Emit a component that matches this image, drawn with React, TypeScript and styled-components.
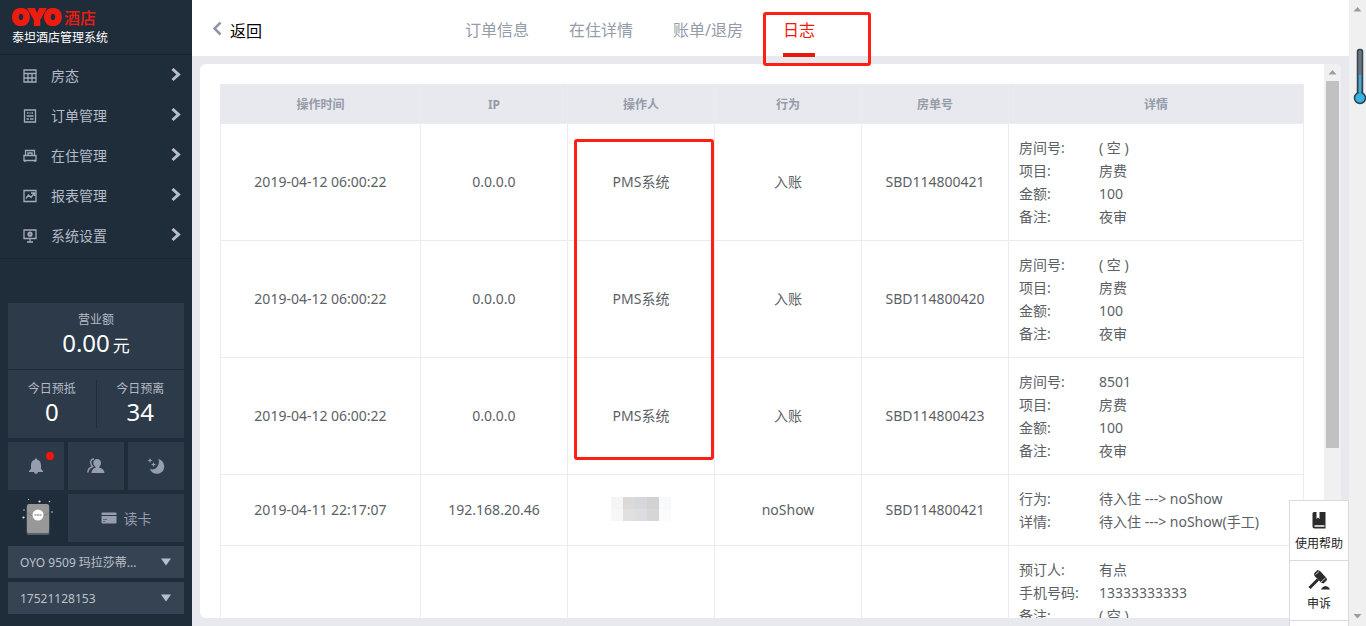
import React from "react";
import styled, { createGlobalStyle } from "styled-components";

const GlobalStyle = createGlobalStyle`
  *, *::before, *::after { box-sizing: border-box; }
  html, body { margin: 0; height: 100%; overflow: hidden; }
  body, button, select {
    font-family: "Noto Sans", "Noto Sans CJK SC", sans-serif;
    font-size: 14px;
  }
  button { border: 0; padding: 0; background: none; cursor: pointer; }
  a { color: inherit; text-decoration: none; }
`;

const Page = styled.div`
  display: flex;
  height: 100vh;
  background: #e8e9ee;
`;

/* ---------- sidebar ---------- */

const Sidebar = styled.aside`
  display: flex;
  flex: 0 0 192px;
  flex-direction: column;
  padding-bottom: 12px;
  background: #1f2d3a;
  color: #b4bac6;
`;

const Brand = styled.header`
  height: 55px;
  padding: 6px 12px 0;
  border-bottom: 1px solid #182430;
`;

const Logo = styled.div`
  display: flex;
  align-items: center;
  gap: 3px;
  height: 22px;
  color: #ee1c0f;
`;

const LogoMark = styled.span`
  font: 900 22px/22px Inter, sans-serif;
  -webkit-text-stroke: 2px #ee1c0f;
`;

const LogoName = styled.span`
  font: 500 16px/22px "Noto Sans CJK SC", sans-serif;
`;

const BrandTitle = styled.div`
  color: #fff;
  font-size: 12px;
  line-height: 20px;
`;

const Menu = styled.nav`
  display: flex;
  flex-direction: column;
  padding-bottom: 3px;
  border-bottom: 1px solid #1a2733;
`;

const MenuLink = styled.a`
  display: flex;
  align-items: center;
  height: 40px;
  padding: 2px 11px 0 23px;
  line-height: 20px;

  span { flex: 1; margin-left: 14px; }
`;

const Dashboard = styled.div`
  display: flex;
  flex-direction: column;
  gap: 4px;
  margin: auto 8px 0;
`;

const Stats = styled.section`
  display: flex;
  flex-direction: column;
  gap: 1px;
`;

const StatRow = styled.div<{ $height: number }>`
  display: flex;
  align-items: center;
  height: ${(p) => p.$height}px;
  background: #2c3a49;
`;

const Stat = styled.div`
  flex: 1;
  text-align: center;
  font-size: 12px;
  line-height: 18px;

  & + & { border-left: 1px solid #1f2d3a; }
`;

const StatValue = styled.div`
  padding-bottom: 2px;
  color: #fff;
  font-size: 24px;
  line-height: 28px;

  small { margin-left: 3px; font-size: 17px; }
`;

const Tools = styled.div`
  display: grid;
  grid-template-columns: repeat(3, 1fr);
  gap: 4px;
`;

const Tool = styled.button<{ $wide?: boolean; $bare?: boolean }>`
  position: relative;
  display: flex;
  align-items: center;
  justify-content: center;
  gap: 7px;
  grid-column: span ${(p) => (p.$wide ? 2 : 1)};
  height: 48px;
  background: ${(p) => (p.$bare ? "transparent" : "#2c3a49")};
  color: #969eae;
`;

const Dot = styled.i`
  position: absolute;
  top: 10px;
  right: 10px;
  width: 8px;
  height: 8px;
  border-radius: 50%;
  background: #f5150a;
`;

const SelectBox = styled.label`
  display: grid;
  align-items: center;
  height: 32px;
  background: #364352;

  select, svg { grid-area: 1 / 1; }
  svg { justify-self: end; margin-right: 13px; pointer-events: none; }
`;

const Select = styled.select`
  width: 100%;
  height: 32px;
  padding: 0 32px 0 12px;
  border: 0;
  appearance: none;
  background: transparent;
  color: #bcc1cc;
  font-size: 12px;
`;

/* ---------- main area ---------- */

const Main = styled.main`
  display: flex;
  flex: 1;
  flex-direction: column;
  min-width: 0;
`;

const TopBar = styled.header`
  display: flex;
  flex: 0 0 56px;
  align-items: stretch;
  padding-left: 20px;
  background: #fff;
`;

const BackButton = styled.button`
  display: flex;
  align-items: center;
  gap: 8px;
  width: 253px;
  padding-top: 3px;
  color: #000;
  font-size: 16px;
`;

const Tabs = styled.nav`
  display: flex;
  gap: 40px;
`;

const Tab = styled.a<{ $active?: boolean }>`
  position: relative;
  padding-top: 18px;
  color: ${(p) => (p.$active ? "#f21a0c" : "#959ba8")};
  font-size: 16px;
  line-height: 24px;

  &::after {
    content: "";
    display: ${(p) => (p.$active ? "block" : "none")};
    height: 4px;
    margin: 11px 0 -1px;
    background: #e9170c;
  }
`;

const TabMark = styled.span`
  position: absolute;
  top: 12px;
  left: -20px;
  z-index: 1;
  width: 108px;
  height: 54px;
  border: 3px solid #ff2013;
  border-radius: 3px;
`;

const Panel = styled.section`
  display: flex;
  flex: 1;
  min-height: 0;
  margin: 8px;
  overflow: hidden;
  border-radius: 6px;
  background: #fff;
`;

const PanelBody = styled.div`
  flex: 1;
  min-width: 0;
  padding: 20px 20px 0;
`;

const Table = styled.table`
  width: 100%;
  table-layout: fixed;
  border-collapse: collapse;
  color: #5c5f66;
`;

const Head = styled.th<{ $width?: number }>`
  width: ${(p) => (p.$width ? `${p.$width}px` : "auto")};
  height: 39px;
  padding: 0;
  border: 1px solid #ebebf2;
  background: #e8e9ee;
  color: #959ba8;
  font-size: 12px;
  font-weight: 700;
`;

const Cell = styled.td<{ $detail?: boolean }>`
  position: relative;
  padding: ${(p) => (p.$detail ? "12px 10px" : "0 0 2px")};
  border: 1px solid #ebebf2;
  text-align: ${(p) => (p.$detail ? "left" : "center")};
  line-height: 23px;
`;

const OperatorMark = styled.span`
  position: absolute;
  top: 15px;
  right: 0;
  left: 6px;
  z-index: 1;
  height: 321px;
  border: 3px solid #ff2013;
  border-radius: 3px;
`;

const Details = styled.dl`
  display: grid;
  grid-template-columns: 80px 1fr;
  margin: 0;
  white-space: nowrap;

  dd { margin: 0; }
`;

const Mosaic = styled.svg`
  display: block;
  margin: auto;
`;

/* ---------- scroll bars and floating parts ---------- */

const ScrollTrack = styled.div`
  display: flex;
  flex: 0 0 17px;
  flex-direction: column;
  align-items: center;
  background: #f0f0f0;
`;

const PageTrack = styled(ScrollTrack)`
  position: relative;
  justify-content: space-between;
  padding: 7px 0 7px;
`;

const PanelTrack = styled(ScrollTrack)`
  padding-top: 6px;
`;

const Thumb = styled.div`
  width: 13px;
  height: 67%;
  margin-top: 6px;
  background: #c1c1c1;
`;

const Thermometer = styled.svg`
  position: absolute;
  top: 48px;
  right: -1px;
`;

const HelpDock = styled.div`
  position: fixed;
  right: 17px;
  bottom: 0;
  z-index: 2;
  width: 60px;
  height: 126px;
  border: 1px solid #d8d9e2;
  border-bottom: 0;
  background: #fff;
`;

const HelpButton = styled.button`
  display: flex;
  flex-direction: column;
  align-items: center;
  gap: 4px;
  width: 100%;
  height: 60px;
  padding-top: 9px;
  border-bottom: 1px solid #d8d9e2;
  color: #222;
  font-size: 12px;
  line-height: 20px;
`;

const Arrow = ({ down }: { down?: boolean }) => (
  <svg width="9" height="5" viewBox="0 0 9 5" fill="#9d9d9d" aria-hidden>
    <path d={down ? "M0.500 0H8.500L4.500 4.500Z" : "M0.500 4.500H8.500L4.500 0Z"} />
  </svg>
);

const Chevron = () => (
  <svg width="10" height="16" viewBox="0 0 10 16" fill="none" stroke="#b9bfca" strokeWidth="3" aria-hidden>
    <path d="M1.500 1L7.500 6.500L1.500 12" />
  </svg>
);

const menu: { name: string; icon: React.ReactNode }[] = [
  { name: "房态", icon: <path d="M1 1H13V13H1ZM1 4.500H13M1 9H13M5 4.500V13M9 4.500V13" /> },
  { name: "订单管理", icon: <path d="M1.500 1H12.500V13H1.500ZM4 4H5.500M6.500 4H7.500M8.500 4H10M3.500 7H10.500M3.500 10H6M7 10H10.500" /> },
  { name: "在住管理", icon: <path d="M2.500 6.500V1.500H11.500V6.500M5 6V4H9V6M1 6.500H13V11.500H1ZM2 11.500V13M12 11.500V13" /> },
  { name: "报表管理", icon: <path d="M1 1.500H13V12.500H1ZM3 9.500L5.500 6L8 8.500L11 4.500M8 4H11.500V7" /> },
  {
    name: "系统设置",
    icon: (
      <>
        <path d="M1 1H13V9.500H1ZM7 9.500V13M4 13H10" />
        <circle cx="7" cy="5.200" r="1.600" strokeWidth="2" />
      </>
    ),
  },
];

type Row = { time?: string; ip?: string; user?: string; masked?: boolean; act?: string; order?: string; detail: [string, string][] };

const nightAudit = (order: string, room: string): Row => ({
  time: "2019-04-12 06:00:22",
  ip: "0.0.0.0",
  user: "PMS系统",
  act: "入账",
  order,
  detail: [["房间号:", room], ["项目:", "房费"], ["金额:", "100"], ["备注:", "夜审"]],
});

const rows: Row[] = [
  nightAudit("SBD114800421", "( 空 )"),
  nightAudit("SBD114800420", "( 空 )"),
  nightAudit("SBD114800423", "8501"),
  {
    time: "2019-04-11 22:17:07",
    ip: "192.168.20.46",
    masked: true,
    act: "noShow",
    order: "SBD114800421",
    detail: [["行为:", "待入住 ---> noShow"], ["详情:", "待入住 ---> noShow(手工)"]],
  },
  { detail: [["预订人:", "有点"], ["手机号码:", "13333333333"], ["备注:", "( 空 )"]] },
];

const mosaicColors = [
  ["#f5f5f5", "#dcdad9", "#d5d7dc", "#d2d2d3", "#f8f9fc"],
  ["#f7f7f6", "#e2dfe0", "#dadde1", "#d6d6d7", "#fafbfc"],
];

export default function App() {
  return (
    <Page>
      <GlobalStyle />
      <Sidebar>
        <Brand>
          <Logo>
            <LogoMark>OYO</LogoMark>
            <LogoName>酒店</LogoName>
          </Logo>
          <BrandTitle>泰坦酒店管理系统</BrandTitle>
        </Brand>
        <Menu>
          {menu.map((m) => (
            <MenuLink href="#" key={m.name}>
              <svg width="14" height="14" viewBox="0 0 14 14" fill="none" stroke="#a3aaba" strokeWidth="1.300" aria-hidden>
                {m.icon}
              </svg>
              <span>{m.name}</span>
              <Chevron />
            </MenuLink>
          ))}
        </Menu>
        <Dashboard>
          <Stats>
            <StatRow $height={66}>
              <Stat>
                营业额
                <StatValue>0.00<small>元</small></StatValue>
              </Stat>
            </StatRow>
            <StatRow $height={68}>
              <Stat>
                今日预抵
                <StatValue>0</StatValue>
              </Stat>
              <Stat>
                今日预离
                <StatValue>34</StatValue>
              </Stat>
            </StatRow>
          </Stats>
          <Tools>
            <Tool aria-label="通知">
              <svg width="16" height="16" viewBox="0 0 16 16" fill="currentColor" aria-hidden>
                <path d="M8 0.500C8.800 0.500 9.300 1 9.300 1.800C12 2.500 13 4.700 13 7.500V11L15 13V14H10C9.700 15.300 9 15.800 8 15.800S6.300 15.300 6 14H1V13L3 11V7.500C3 4.700 4 2.500 6.700 1.800C6.700 1 7.200 0.500 8 0.500Z" />
              </svg>
              <Dot />
            </Tool>
            <Tool aria-label="客人">
              <svg width="18" height="16" viewBox="0 0 18 16" fill="currentColor" aria-hidden>
                <path d="M10 1C12.700 1 14 2.800 14 5C14 6.800 13.200 8 12.300 8.800V9.800C15.500 10.300 17.300 12 17.500 15H4.500C4.700 12 6 10.300 8.500 9.800V8.800C7.200 8 6.300 6.800 6.300 5C6.300 2.800 7.600 1 10 1Z" />
                <path d="M7 1C4.600 1 3.500 2.700 3.800 5C4 6.600 4.600 7.700 5.600 8.500C2.500 9.700 1 11.500 0.800 14.500" fill="none" stroke="currentColor" strokeWidth="1.500" />
              </svg>
            </Tool>
            <Tool aria-label="夜审">
              <svg width="18" height="18" viewBox="0 0 18 18" fill="currentColor" aria-hidden>
                <path d="M11.500 2C15 3 17.200 6 17.200 9.500C17.200 13.700 14 16.800 10 16.800C6.500 16.800 4 15 2.800 11.800C5 13 8 12.500 9.800 10.200C11.800 7.800 12.500 5 11.500 2Z" />
                <path d="M3 1L3.700 2.800L5.500 3.500L3.700 4.200L3 6L2.300 4.200L0.500 3.500L2.300 2.800ZM6.500 5L7.200 6.800L9 7.500L7.200 8.200L6.500 10L5.800 8.200L4 7.500L5.800 6.800Z" />
              </svg>
            </Tool>
            <Tool $bare aria-label="OYO 房卡">
              <svg width="36" height="42" viewBox="0 0 36 42" aria-hidden>
                <rect x="8.500" y="8" width="23" height="30" rx="2" fill="#55606b" />
                <rect x="9" y="7" width="22" height="29" rx="2" fill="#989898" />
                <path d="M9 16L20 22L31 16" fill="none" stroke="#858585" />
                <circle cx="20" cy="18" r="5.500" fill="#fff" />
                <path d="M16.500 18H23.500" stroke="#b5b5b5" strokeWidth="2" strokeDasharray="2 0.500" />
                <g fill="#dfe4e8">
                  <circle cx="21.500" cy="4.500" r="1.100" />
                  <circle cx="31.500" cy="4.500" r="0.800" />
                  <circle cx="10.500" cy="2.500" r="0.600" />
                  <circle cx="6" cy="13" r="0.700" />
                  <circle cx="5.500" cy="20.500" r="1.100" />
                  <circle cx="34" cy="15" r="1.100" fill="#7e8791" />
                </g>
              </svg>
            </Tool>
            <Tool $wide>
              <svg width="16" height="12" viewBox="0 0 16 12" fill="currentColor" aria-hidden>
                <path d="M1.500 0.500H14.500Q15.500 0.500 15.500 1.500V3H0.500V1.500Q0.500 0.500 1.500 0.500ZM0.500 4H15.500V10.500Q15.500 11.500 14.500 11.500H1.500Q0.500 11.500 0.500 10.500Z" />
                <path d="M2 9.500H4M2 7.500H6" stroke="#5c6777" />
              </svg>
              读卡
            </Tool>
          </Tools>
          <SelectBox>
            <Select aria-label="酒店">
              <option>OYO 9509 玛拉莎蒂...</option>
            </Select>
            <svg width="10" height="8" viewBox="0 0 10 8" fill="#b9bfca" aria-hidden><path d="M0 0.500H10L5 7.500Z" /></svg>
          </SelectBox>
          <SelectBox>
            <Select aria-label="账号">
              <option>17521128153</option>
            </Select>
            <svg width="10" height="8" viewBox="0 0 10 8" fill="#b9bfca" aria-hidden><path d="M0 0.500H10L5 7.500Z" /></svg>
          </SelectBox>
        </Dashboard>
      </Sidebar>

      <Main>
        <TopBar>
          <BackButton>
            <svg width="10" height="16" viewBox="0 0 10 16" fill="none" stroke="#8f95a3" strokeWidth="2.500" aria-hidden>
              <path d="M8.500 0.500L2.500 6.500L8.500 12.500" />
            </svg>
            返回
          </BackButton>
          <Tabs>
            <Tab href="#">订单信息</Tab>
            <Tab href="#">在住详情</Tab>
            <Tab href="#">账单/退房</Tab>
            <Tab href="#" $active>
              日志
              <TabMark />
            </Tab>
          </Tabs>
        </TopBar>
        <Panel>
          <PanelBody>
            <Table>
              <thead>
                <tr>
                  <Head $width={200}>操作时间</Head>
                  <Head $width={147}>IP</Head>
                  <Head $width={147}>操作人</Head>
                  <Head $width={147}>行为</Head>
                  <Head $width={147}>房单号</Head>
                  <Head>详情</Head>
                </tr>
              </thead>
              <tbody>
                {rows.map((r, i) => (
                  <tr key={i}>
                    <Cell>{r.time}</Cell>
                    <Cell>{r.ip}</Cell>
                    <Cell>
                      {r.user}
                      {i === 0 && <OperatorMark />}
                      {r.masked && (
                        <Mosaic width="60" height="24" aria-hidden>
                          {mosaicColors.flatMap((line, y) =>
                            line.map((c, x) => <rect key={`${x}-${y}`} x={x * 12} y={y * 12} width="12" height="12" fill={c} />)
                          )}
                        </Mosaic>
                      )}
                    </Cell>
                    <Cell>{r.act}</Cell>
                    <Cell>{r.order}</Cell>
                    <Cell $detail>
                      <Details>
                        {r.detail.map(([k, v]) => (
                          <React.Fragment key={k}>
                            <dt>{k}</dt>
                            <dd>{v}</dd>
                          </React.Fragment>
                        ))}
                      </Details>
                    </Cell>
                  </tr>
                ))}
              </tbody>
            </Table>
          </PanelBody>
          <PanelTrack>
            <Arrow />
            <Thumb />
          </PanelTrack>
        </Panel>
      </Main>

      <PageTrack>
        <Arrow />
        <Arrow down />
        <Thermometer width="14" height="58" viewBox="0 0 14 58" aria-hidden>
          <rect x="4.500" y="1.500" width="5" height="46" rx="2" fill="#687680" stroke="#34424c" strokeWidth="1.500" />
          <circle cx="7" cy="50" r="5.500" fill="#35b5e5" stroke="#34424c" strokeWidth="1.500" />
          <rect x="6" y="27" width="2" height="22" fill="#2cb2e8" />
        </Thermometer>
      </PageTrack>

      <HelpDock>
        <HelpButton>
          <svg width="20" height="20" viewBox="0 0 20 20" fill="#2b2b2b" aria-hidden>
            <path d="M5 2Q3.500 2 3.500 3.500V16.500Q3.500 18.500 5.500 18.500H16.500V2H10.500V9L9 7.500L7.500 9V2Z" />
            <path d="M5.500 16H15.500" stroke="#fff" strokeWidth="1.500" />
          </svg>
          使用帮助
        </HelpButton>
        <HelpButton>
          <svg width="22" height="20" viewBox="0 0 22 20" fill="#2b2b2b" aria-hidden>
            <path d="M6 3.500L9.500 0L12 1L18.500 8L19 10L15.500 13.500L13 12.500L6.500 6Z" />
            <path d="M1.500 18L10 9.500" stroke="#2b2b2b" strokeWidth="3" />
            <path d="M13 19.500Q14 16.500 17.500 16Q21 16.500 22 19.500Z" />
            <path d="M7.500 4.500L11 1.500M13 12L17.500 8" stroke="#fff" strokeWidth="0.800" />
          </svg>
          申诉
        </HelpButton>
      </HelpDock>
    </Page>
  );
}
